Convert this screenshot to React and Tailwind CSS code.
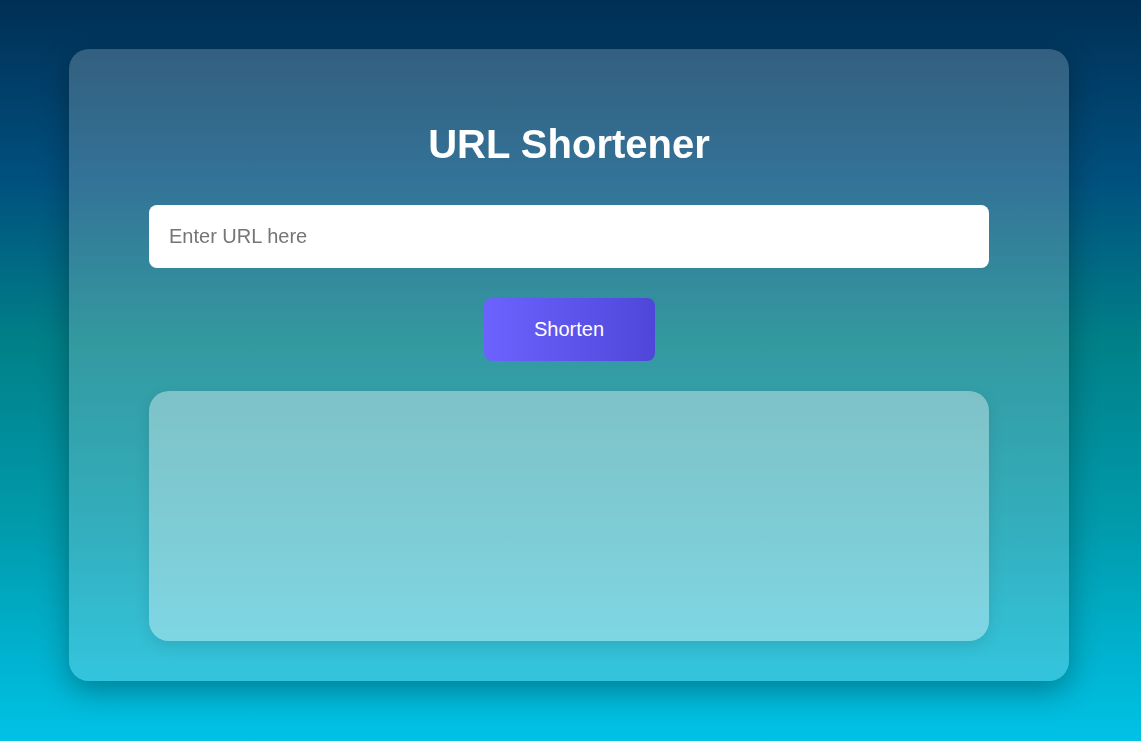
export default function App() {
  return (
    <div
      className="min-h-[741px] w-full flex justify-start pl-[69px] pt-[49px] pb-[60px]"
      style={{
        fontFamily: '"Liberation Sans", Arial, sans-serif',
      }}
    >
      <div className="fixed inset-0 -z-10 bg-[linear-gradient(to_bottom,#002f55_0%,#00507e_24%,#008088_46%,#009cae_72%,#00c2e6_100%)]" />
      <div className="w-[1000px] rounded-[20px] bg-white/20 shadow-[0_10px_30px_rgba(0,0,0,0.3)] px-[80px] pt-[71px] pb-[40px] flex flex-col items-center">
        <h1 className="text-[40px] leading-[48px] font-bold text-white mb-[37px]">URL Shortener</h1>
        <input
          type="text"
          placeholder="Enter URL here"
          className="w-full h-[63px] rounded-[8px] bg-white px-[20px] text-[20px] text-gray-800 placeholder:text-[#757575] outline-none"
        />
        <button className="mt-[30px] w-[171px] h-[63px] rounded-[8px] bg-[linear-gradient(to_right,#6c63ff,#4f46d9)] text-white text-[20px] pb-[2px]">
          Shorten
        </button>
        <div className="mt-[30px] w-full h-[250px] rounded-[20px] bg-white/[0.37] shadow-[0_5px_15px_rgba(0,0,0,0.1)]" />
      </div>
    </div>
  );
}
